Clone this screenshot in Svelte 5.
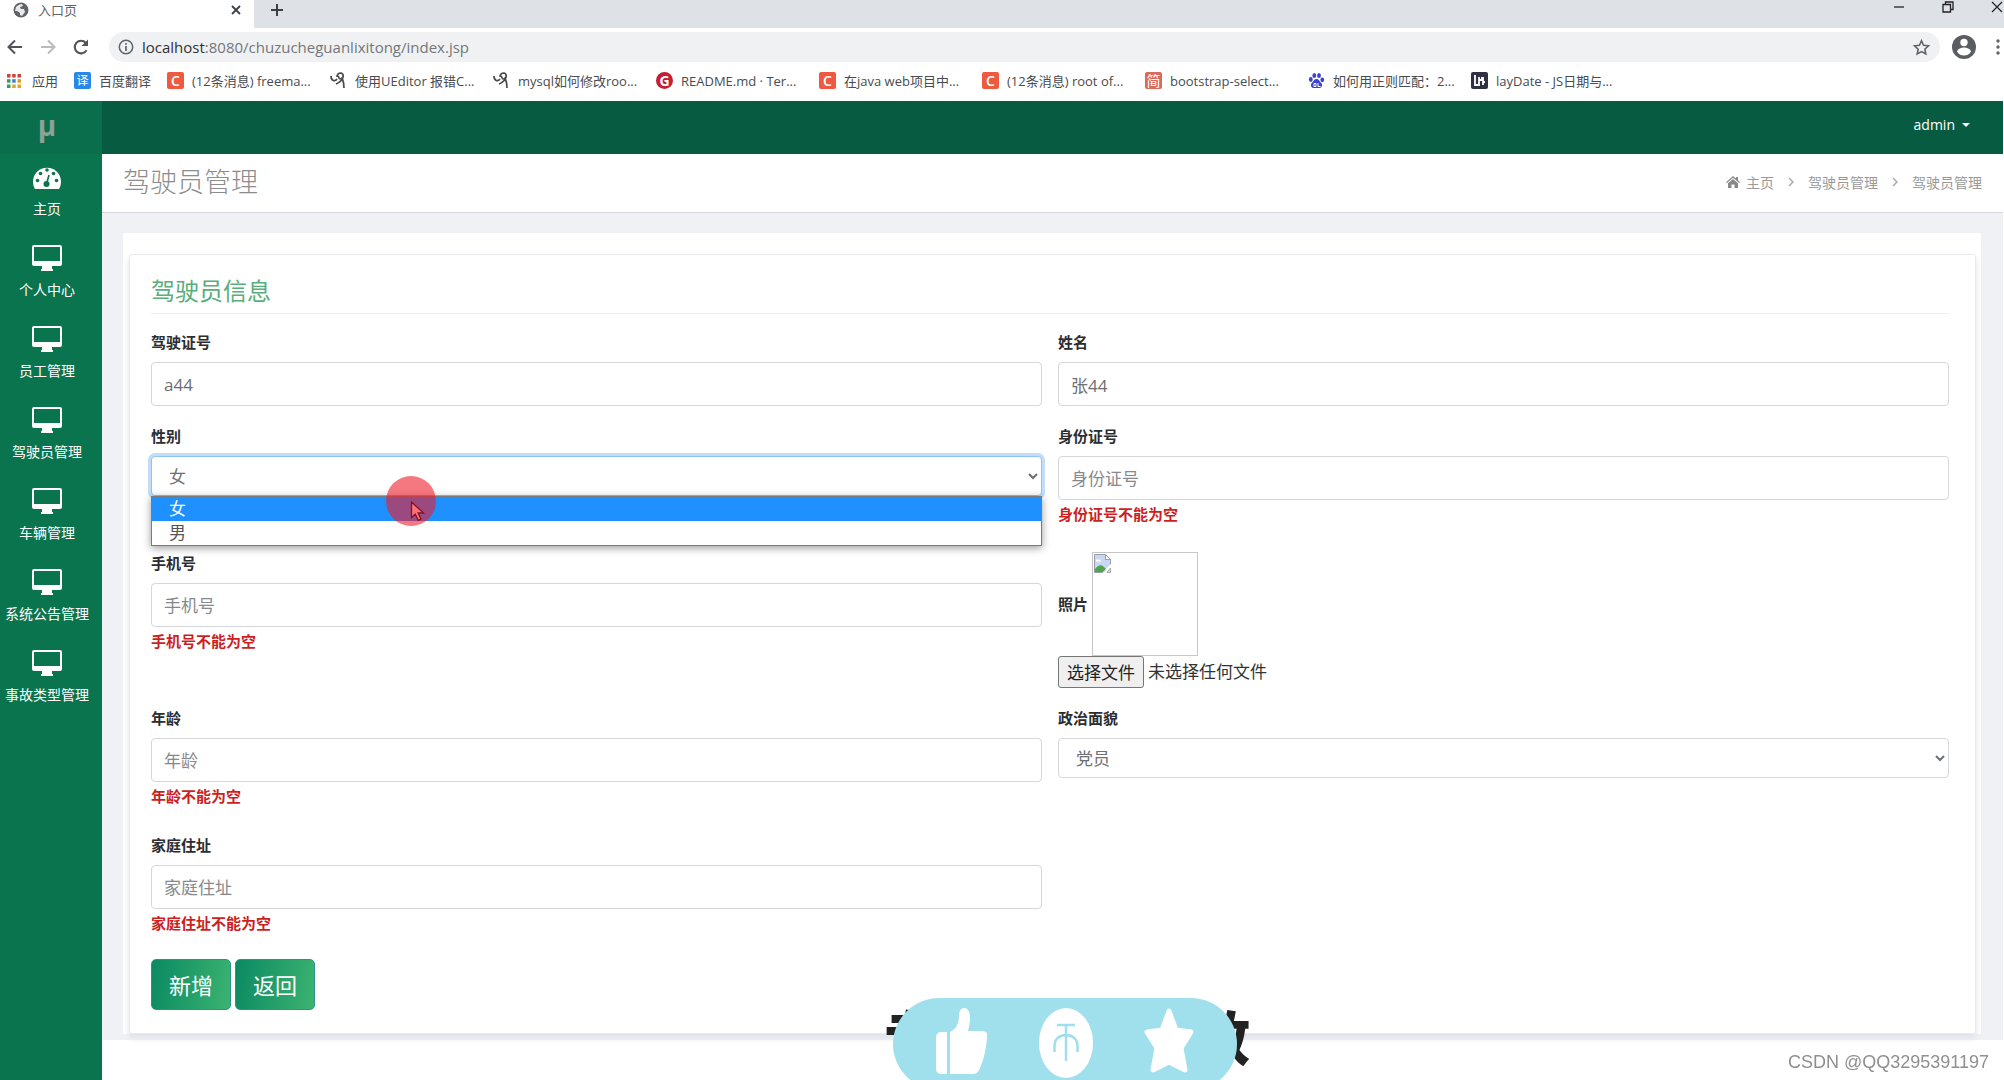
<script>
  const bookmarks = [
    { icon: 'yi', text: '百度翻译', size: 'short' },
    { icon: 'c', text: '(12条消息) freema...' },
    { icon: 'ue', text: '使用UEditor 报错C...' },
    { icon: 'ue', text: 'mysql如何修改roo...' },
    { icon: 'g', text: 'README.md · Ter...' },
    { icon: 'c', text: '在java web项目中...' },
    { icon: 'c', text: '(12条消息) root of...' },
    { icon: 'jian', text: 'bootstrap-select...' },
    { icon: 'paw', text: '如何用正则匹配：2...' },
    { icon: 'lay', text: 'layDate - JS日期与...' },
  ];

  const menu = ['个人中心', '员工管理', '驾驶员管理', '车辆管理', '系统公告管理', '事故类型管理'];

  let licence = $state('a44');
  let name = $state('张44');
  let sex = $state('女');
  let idCard = $state('');
  let phone = $state('');
  let age = $state('');
  let party = $state('党员');
  let address = $state('');
  let open = $state(true);
  let fileInput;

  function pick(value) {
    sex = value;
    open = false;
  }
</script>

<div class="window">
  <header class="browser">
    <div class="tabs">
      <div class="tab">
        <svg class="globe" viewBox="0 0 16 16"><circle cx="8" cy="8" r="7.5" fill="#5f6368" /><path d="M3 5c2-2 4-3 6-3l1 2-3 1 1 2 3 0 1 3-3 4-2-1 0-2-3-2-2 0z" fill="#fff" opacity=".85" /></svg>
        <span>入口页</span>
        <button class="plain close" aria-label="关闭标签页">
          <svg viewBox="0 0 10 10" width="10" height="10"><path d="M1 1l8 8M9 1l-8 8" stroke="#3c4043" stroke-width="1.8" /></svg>
        </button>
      </div>
      <button class="plain new-tab" aria-label="新标签页">
        <svg viewBox="0 0 14 14" width="14" height="14"><path d="M7 1v12M1 7h12" stroke="#3c4043" stroke-width="2" /></svg>
      </button>
      <div class="win-controls">
        <button class="plain" aria-label="最小化"><svg viewBox="0 0 12 12" width="12" height="12"><path d="M1 6h10" stroke="#222" stroke-width="1.3" /></svg></button>
        <button class="plain" aria-label="还原"><svg viewBox="0 0 12 12" width="12" height="12"><path d="M1 3.500h7.500v7.500h-7.500zM3.500 3.500v-2.500h7.500v7.500h-2.500" fill="none" stroke="#222" stroke-width="1.3" /></svg></button>
        <button class="plain" aria-label="关闭"><svg viewBox="0 0 12 12" width="12" height="12"><path d="M1 1l10 10M11 1l-10 10" stroke="#222" stroke-width="1.2" /></svg></button>
      </div>
    </div>

    <div class="toolbar">
      <button class="plain" aria-label="后退"><svg viewBox="0 0 18 18" width="18" height="18"><path d="M16 9H3M9 2.500L2.500 9 9 15.500" fill="none" stroke="#50545a" stroke-width="2" /></svg></button>
      <button class="plain" aria-label="前进"><svg viewBox="0 0 18 18" width="18" height="18"><path d="M2 9h13M9 2.500l6.500 6.500L9 15.500" fill="none" stroke="#b9bbbe" stroke-width="2" /></svg></button>
      <button class="plain" aria-label="刷新"><svg viewBox="0 0 18 18" width="18" height="18"><path d="M14.500 12.200A6.300 6.300 0 1 1 13.700 4.800" fill="none" stroke="#50545a" stroke-width="2.100" /><path d="M16 1.500v6.500H9.500z" fill="#50545a" /></svg></button>
      <div class="address">
        <svg viewBox="0 0 16 16" width="16" height="16"><circle cx="8" cy="8" r="6.700" fill="none" stroke="#5f6368" stroke-width="1.500" /><path d="M8 7v5M8 4v1.700" stroke="#5f6368" stroke-width="1.700" /></svg>
        <span class="url"><b>localhost</b>:8080/chuzucheguanlixitong/index.jsp</span>
        <svg class="star" viewBox="0 0 24 24" width="19" height="19"><path d="M12 3.500l2.600 5.700 6.200.7-4.600 4.200 1.300 6.100L12 17.100l-5.500 3.100 1.300-6.100-4.600-4.200 6.200-.7z" fill="none" stroke="#5f6368" stroke-width="2" /></svg>
      </div>
      <svg class="avatar" viewBox="0 0 24 24" width="24" height="24"><circle cx="12" cy="12" r="12" fill="#5a5d61" /><circle cx="12" cy="7.500" r="3.700" fill="#fff" /><path d="M5 16.500c1-3 4-4 7-4s6 1 7 4c-2 3-4 4-7 4s-5-1-7-4z" fill="#fff" /></svg>
      <svg class="dots" viewBox="0 0 4 16" width="4" height="16"><circle cx="2" cy="2" r="1.700" fill="#5f6368" /><circle cx="2" cy="8" r="1.700" fill="#5f6368" /><circle cx="2" cy="14" r="1.700" fill="#5f6368" /></svg>
    </div>

    <nav class="bookmarks">
      <a class="apps" href="#apps">
        <svg viewBox="0 0 14 14" width="14" height="14">
          <path d="M0 0h3.500v3.500H0zM5.200 0h3.500v3.500H5.200zM10.500 0H14v3.500h-3.500z" fill="#c9453b" />
          <path d="M0 5.200h3.500v3.500H0z" fill="#3c9a5a" /><path d="M5.200 5.200h3.500v3.500H5.200z" fill="#3f7fd6" /><path d="M10.500 5.200H14v3.500h-3.500z" fill="#dc9f25" />
          <path d="M0 10.500h3.500V14H0z" fill="#3c9a5a" /><path d="M5.200 10.500h3.500V14H5.200zM10.500 10.500H14V14h-3.500z" fill="#dca92e" />
        </svg>
        <span>应用</span>
      </a>
      {#each bookmarks as mark}
        <a class={mark.size} href="#bookmark">
          {#if mark.icon === 'yi'}
            <i class="fav yi">译</i>
          {:else if mark.icon === 'c'}
            <i class="fav csdn">C</i>
          {:else if mark.icon === 'g'}
            <i class="fav gitee">G</i>
          {:else if mark.icon === 'jian'}
            <i class="fav jian">简</i>
          {:else if mark.icon === 'ue'}
            <svg viewBox="0 0 17 17" width="17" height="17"><path d="M1 4c0 5 4 6 6 3M7 5c0-3 2-4 4-4 3 1 3 5 0 6-2 0-3-2-2-3M12 5c1 3 2 6 2 11M6 12c3-1 4-3 6-4" fill="none" stroke="#4a4a4a" stroke-width="1.700" /></svg>
          {:else if mark.icon === 'paw'}
            <svg viewBox="0 0 17 17" width="17" height="17" fill="#3b43cf"><ellipse cx="2.800" cy="7.500" rx="1.900" ry="2.400" /><ellipse cx="6.300" cy="3.500" rx="1.900" ry="2.600" /><ellipse cx="11" cy="3.500" rx="1.900" ry="2.600" /><ellipse cx="14.300" cy="7.800" rx="1.900" ry="2.400" /><path d="M8.500 7c2.500 0 3 2.500 4.500 3.800 2 2 1 5.200-1.500 5.200H5.500C3 16 2 12.800 4 10.800 5.500 9.500 6 7 8.500 7z" /><path d="M6 11.500h2v3H6zM10 11v3.500h2.500" fill="none" stroke="#fff" /></svg>
          {:else}
            <svg viewBox="0 0 17 17" width="17" height="17"><rect width="17" height="17" rx="2" fill="#2f3140" /><path d="M4 3v10h3M8 5v9M8 8h3v-3M12 5v8M12 10h2" fill="none" stroke="#fff" stroke-width="1.800" /></svg>
          {/if}
          <span>{mark.text}</span>
        </a>
      {/each}
    </nav>
  </header>

  <div class="app">
    <aside>
      <div class="logo">μ</div>
      <ul>
        <li>
          <a href="#home">
            <svg viewBox="0 0 30 26" width="30" height="26"><path d="M3 25A14 14 0 1 1 27 25z" fill="#fff" /><g fill="#0b744f"><circle cx="5.500" cy="16.500" r="1.800" /><circle cx="8.500" cy="9.500" r="1.800" /><circle cx="15" cy="6" r="1.800" /><circle cx="21.500" cy="9.500" r="1.800" /><circle cx="24.500" cy="16.500" r="1.800" /><circle cx="14.500" cy="20" r="3" /></g><path d="M14.500 20l2.500-9" stroke="#0b744f" stroke-width="1.600" /></svg>
            <span>主页</span>
          </a>
        </li>
        {#each menu as item}
          <li>
            <a href="#menu">
              <svg viewBox="0 0 30 26" width="30" height="26"><path fill-rule="evenodd" d="M2 0h26a2 2 0 0 1 2 2v17a2 2 0 0 1-2 2h-8v3h1v2H9v-2h1v-3H2a2 2 0 0 1-2-2V2a2 2 0 0 1 2-2zM2 2v14h26V2z" fill="#fff" /></svg>
              <span>{item}</span>
            </a>
          </li>
        {/each}
      </ul>
    </aside>

    <div class="page">
      <div class="topbar">
        <button class="plain user">admin <i class="caret"></i></button>
      </div>

      <div class="heading">
        <h1>驾驶员管理</h1>
        <nav class="crumbs">
          <a href="#home">
            <svg viewBox="0 0 14 12" width="14" height="12"><path d="M7 0l3 2.600V1h2v3.300l2 1.900-.8.900L7 1.800.8 7.100 0 6.200zM7 3l5 4.300V12H8.500V8.500h-3V12H2V7.300z" fill="#888" /></svg>
            主页</a>
          <svg viewBox="0 0 6 10" width="6" height="10"><path d="M1 1l4 4-4 4" fill="none" stroke="#aaa" stroke-width="1.500" /></svg>
          <a href="#driver">驾驶员管理</a>
          <svg viewBox="0 0 6 10" width="6" height="10"><path d="M1 1l4 4-4 4" fill="none" stroke="#aaa" stroke-width="1.500" /></svg>
          <span>驾驶员管理</span>
        </nav>
      </div>

      <main>
        <div class="wrapper">
          <form class="panel" onsubmit={(e) => e.preventDefault()}>
            <h2>驾驶员信息</h2>
            <div class="fields">
              <div>
                <label for="licence">驾驶证号</label>
                <input id="licence" bind:value={licence} />
              </div>
              <div>
                <label for="name">姓名</label>
                <input id="name" bind:value={name} />
              </div>
              <div>
                <label for="sex">性别</label>
                <div class="select-box" class:open>
                  <select id="sex" bind:value={sex}>
                    <option>女</option>
                    <option>男</option>
                  </select>
                  {#if open}
                    <div class="options">
                      <button type="button" class="active" onclick={() => pick('女')}>女</button>
                      <button type="button" onclick={() => pick('男')}>男</button>
                    </div>
                    <svg class="pointer" viewBox="0 0 50 50" width="50" height="50"><circle cx="25" cy="25" r="25" fill="#ee1c2a" opacity=".6" /><path d="M25.500 26v15.500l3.800-3.500 3 6.500 2.700-1.300-2.900-6.200h5.400z" fill="#ff7079" stroke="#7e1428" stroke-width="1.300" /></svg>
                  {/if}
                </div>
              </div>
              <div>
                <label for="id-card">身份证号</label>
                <input id="id-card" placeholder="身份证号" bind:value={idCard} />
                <p class="error">身份证号不能为空</p>
              </div>
              <div>
                <label for="phone">手机号</label>
                <input id="phone" placeholder="手机号" bind:value={phone} />
                <p class="error">手机号不能为空</p>
              </div>
              <div>
                <div class="photo">
                  <label for="photo">照片</label>
                  <div class="preview">
                    <svg viewBox="0 0 17 19" width="17" height="19"><path d="M.5.500h11l5 5v13H.5z" fill="#c8d8f4" stroke="#9a9da3" /><path d="M11.500.500v5h5z" fill="#fff" stroke="#9a9da3" /><path d="M2 7c0-2 2-2 2.500-1C6 5 7.500 6 7 7.500H2z" fill="#fff" /><path d="M1 18v-3c3-4 6-5 9-2l2 2-3 3z" fill="#4da64a" /><path d="M8 19l9-9v9z" fill="#fff" /><path d="M9 18.500l3-3M13 18.500h3.500V14z" fill="#c8d8f4" stroke="#9a9da3" stroke-width=".8" /></svg>
                  </div>
                </div>
                <div class="file">
                  <button type="button" onclick={() => fileInput.click()}>选择文件</button>
                  <span>未选择任何文件</span>
                  <input id="photo" type="file" hidden bind:this={fileInput} />
                </div>
              </div>
              <div>
                <label for="age">年龄</label>
                <input id="age" placeholder="年龄" bind:value={age} />
                <p class="error">年龄不能为空</p>
              </div>
              <div>
                <label for="party">政治面貌</label>
                <div class="select-box">
                  <select id="party" bind:value={party}>
                    <option>党员</option>
                    <option>团员</option>
                    <option>群众</option>
                  </select>
                </div>
              </div>
              <div>
                <label for="address">家庭住址</label>
                <input id="address" placeholder="家庭住址" bind:value={address} />
                <p class="error">家庭住址不能为空</p>
              </div>
            </div>
            <div class="actions">
              <button type="submit">新增</button>
              <button type="button">返回</button>
            </div>
          </form>
        </div>
      </main>
    </div>
  </div>

  <div class="overlay">
    <div class="caption"><span>专</span><span>教</span></div>
    <div class="pill">
      <svg viewBox="0 0 52 66" width="52" height="66" fill="#fff"><path d="M5 24h6v42H5a5 5 0 0 1-5-5V29a5 5 0 0 1 5-5zM14 24c6-3 9-8 9-17 0-4 2-7 5-7 4 0 6 4 6 9 0 6-1 10-2 14h14c4 0 6 2 5 6-1 12-3 22-7 31-2 5-4 6-8 6H14z" /></svg>
      <svg viewBox="0 0 54 70" width="54" height="70"><ellipse cx="27" cy="35" rx="27" ry="35" fill="#fff" /><path d="M18 17h18M27 17v36M15.500 44V38c0-7 5-11 11.500-11s11.500 4 11.500 11v6" fill="none" stroke="#9fdfec" stroke-width="2.500" /></svg>
      <svg viewBox="0 0 50 66" width="50" height="66"><path d="M25 3l7 19 15 2-10 16 4 22-16-8-16 8 4-22L3 24l15-2z" fill="#fff" stroke="#fff" stroke-width="5" stroke-linejoin="round" /></svg>
    </div>
  </div>
  <div class="watermark">CSDN @QQ3295391197</div>
</div>

<style>
:global(body) {
    margin: 0;
    overflow: hidden;
}

.window {
    display: flex;
    flex-direction: column;
    min-height: 100vh;
    background: #fff;
    color: #333;
    font-family: "Open Sans", "Noto Sans CJK SC", sans-serif;
    font-size: 14px;
}

.window *, .window *::before {
    box-sizing: border-box;
}

svg {
    display: block;
    flex: none;
}

a {
    color: inherit;
    text-decoration: none;
}

button, input, select {
    font-family: inherit;
}

.plain {
    display: flex;
    align-items: center;
    border: 0;
    padding: 0;
    background: none;
}

/* browser frame */
.tabs {
    display: flex;
    height: 28px;
    background: #dee1e6;
}

.tab {
    display: flex;
    width: 254px;
    padding: 0 13px 9px;
    align-items: center;
    background: #fff;
    font-size: 13px;
    color: #5f6368;
}

.tab span {
    margin-left: 9px;
}

.globe {
    width: 16px;
    height: 16px;
}

.close {
    margin-left: auto;
}

.new-tab {
    margin-left: 16px;
    padding-bottom: 8px;
}

.win-controls {
    display: flex;
    gap: 37px;
    margin-left: auto;
    padding: 0 1px 14px 0;
}

.toolbar {
    display: flex;
    height: 38px;
    align-items: center;
    padding: 0 4px 0 6px;
}

.toolbar > .plain {
    margin-right: 15px;
}

.address {
    display: flex;
    flex: 1;
    align-items: center;
    height: 30px;
    margin-left: 4px;
    padding: 0 9px;
    border-radius: 15px;
    background: #f0f1f3;
}

.url {
    margin-left: 8px;
    color: #73777b;
    font-size: 15px;
}

.url b {
    font-weight: 400;
    color: #303236;
}

.star {
    margin-left: auto;
}

.avatar {
    margin-left: 12px;
}

.dots {
    margin-left: 20px;
}

.bookmarks {
    display: flex;
    height: 35px;
    padding: 0 7px 6px;
    align-items: center;
    font-size: 13px;
    color: #484b4f;
    white-space: nowrap;
}

.bookmarks a {
    display: flex;
    width: 163px;
    align-items: center;
    gap: 8px;
}

.bookmarks .apps {
    width: 67px;
    gap: 11px;
}

.bookmarks .short {
    width: 93px;
}

.fav {
    width: 17px;
    height: 17px;
    border-radius: 2px;
    color: #fff;
    font-size: 14px;
    font-style: normal;
    line-height: 17px;
    text-align: center;
}

.yi {
    background: #2a87e8;
    font-size: 12px;
}

.csdn {
    background: #ee5a40;
    font-weight: 600;
}

.gitee {
    border-radius: 50%;
    background: #c71d33;
    font-weight: 700;
}

.jian {
    background: #dc6a5a;
}

/* application */
.app {
    display: flex;
    flex: 1;
    margin-right: 1px;
}

aside {
    width: 102px;
    flex: none;
    background: #0a744f;
    color: #fff;
}

.logo {
    height: 53px;
    padding-right: 8px;
    background: #0a6d4b;
    color: #8ba396;
    font-size: 28px;
    font-weight: 700;
    line-height: 48px;
    text-align: center;
}

aside ul {
    margin: 0;
    padding: 0;
    list-style: none;
}

aside li a {
    display: flex;
    height: 81px;
    padding: 10px 8px 0 0;
    flex-direction: column;
    align-items: center;
    gap: 7px;
    line-height: 24px;
    white-space: nowrap;
}

.page {
    flex: 1;
    min-width: 0;
}

.topbar {
    display: flex;
    height: 53px;
    justify-content: flex-end;
    padding: 0 33px 6px 0;
    background: #075b40;
}

.user {
    color: #fff;
    font-size: 14px;
    font-weight: 500;
}

.caret {
    margin-left: 7px;
    border: 4px solid transparent;
    border-top-color: #fff;
    border-bottom: 0;
}

.heading {
    display: flex;
    height: 59px;
    align-items: center;
    justify-content: space-between;
    padding: 0 21px 2px;
    border-bottom: 1px solid #d5d7da;
}

h1 {
    margin: 0;
    color: #8d8d8d;
    font-size: 27px;
    font-weight: 300;
    line-height: 40px;
}

.crumbs {
    display: flex;
    align-items: center;
    gap: 14px;
    color: #999;
}

.crumbs a {
    display: flex;
    align-items: center;
    gap: 6px;
}

main {
    padding: 20px 22px 6px 21px;
    background: #f0f1f4;
}

.wrapper {
    padding: 21px 5px 0 6px;
    background: #fff;
}

.panel {
    padding: 20px 26px 23px 21px;
    border: 1px solid #e9eaee;
    border-radius: 3px;
    background: #fff;
    box-shadow: 0 4px 6px #dfe1ea;
}

h2 {
    margin: 0 0 17px;
    padding-bottom: 6px;
    border-bottom: 1px solid #eeeff1;
    color: #5aae7c;
    font-size: 24px;
    font-weight: 400;
    line-height: 32px;
}

.fields {
    display: grid;
    grid-template-columns: 1fr 1fr;
    gap: 19px 16px;
}

label {
    display: block;
    margin-bottom: 9px;
    color: #2b2d31;
    font-size: 15px;
    font-weight: 700;
    line-height: 22px;
}

input, select {
    display: block;
    width: 100%;
    height: 44px;
    padding: 0 12px;
    border: 1px solid #d6d7da;
    border-radius: 4px;
    background: #fff;
    color: #6d7073;
    font-size: 17px;
}

input::placeholder {
    color: #868a8e;
}

input[hidden] {
    display: none;
}

select {
    height: 40px;
    padding: 1px 13px 0;
}

.error {
    margin: 0;
    padding-bottom: 5px;
    color: #cc1f1f;
    font-size: 15px;
    font-weight: 700;
    line-height: 28px;
}

.select-box {
    position: relative;
}

.open select {
    border-color: #8fc3f2;
    box-shadow: 0 0 0 3px #c3ddf7;
}

.options {
    position: absolute;
    top: 100%;
    left: 0;
    right: 0;
    z-index: 1;
    border: 1px solid #7a7a7a;
    background: #fff;
    box-shadow: 0 2px 8px rgba(0, 0, 0, 0.4);
}

.options button {
    display: block;
    width: 100%;
    height: 24px;
    padding: 0 17px;
    border: 0;
    background: #fff;
    color: #555;
    font-size: 17px;
    line-height: 24px;
    text-align: left;
}

.options .active {
    background: #1e90ff;
    color: #fff;
}

.pointer {
    position: absolute;
    top: 20px;
    left: 235px;
    z-index: 2;
}

.photo {
    display: flex;
    align-items: center;
    gap: 4px;
}

.photo label {
    margin: 0;
}

.preview {
    width: 106px;
    height: 104px;
    padding: 1px;
    border: 1px solid #c6c6c6;
}

.file {
    display: flex;
    align-items: center;
    gap: 4px;
    font-size: 17px;
    line-height: 30px;
}

.file button {
    height: 32px;
    padding: 0 8px 2px;
    border: 1px solid #767676;
    border-radius: 3px;
    background: #efefef;
    color: #222;
    font-size: 17px;
}

.actions {
    display: flex;
    gap: 4px;
    margin-top: 17px;
}

.actions button {
    height: 51px;
    padding: 0 17px 2px;
    border: 1px solid #2c9389;
    border-radius: 5px;
    background: linear-gradient(100deg, #0b8a62, #3cb371);
    color: #fff;
    font-size: 22px;
}

/* video overlay */
.overlay {
    position: fixed;
    bottom: -10px;
    left: calc(50% - 109px);
    width: 344px;
    height: 92px;
}

.caption {
    position: absolute;
    top: 10px;
    left: -9px;
    right: -13px;
    display: flex;
    justify-content: space-between;
    color: #222;
    font-size: 58px;
    font-weight: 900;
    line-height: 60px;
}

.pill {
    position: relative;
    display: flex;
    height: 92px;
    padding: 10px 43px 0;
    justify-content: space-between;
    border-radius: 46px;
    background: #a0dfec;
}

.watermark {
    position: fixed;
    right: 15px;
    bottom: 6px;
    color: #8f8f8f;
    font-family: "Liberation Sans", sans-serif;
    font-size: 18px;
    line-height: 24px;
}
</style>
